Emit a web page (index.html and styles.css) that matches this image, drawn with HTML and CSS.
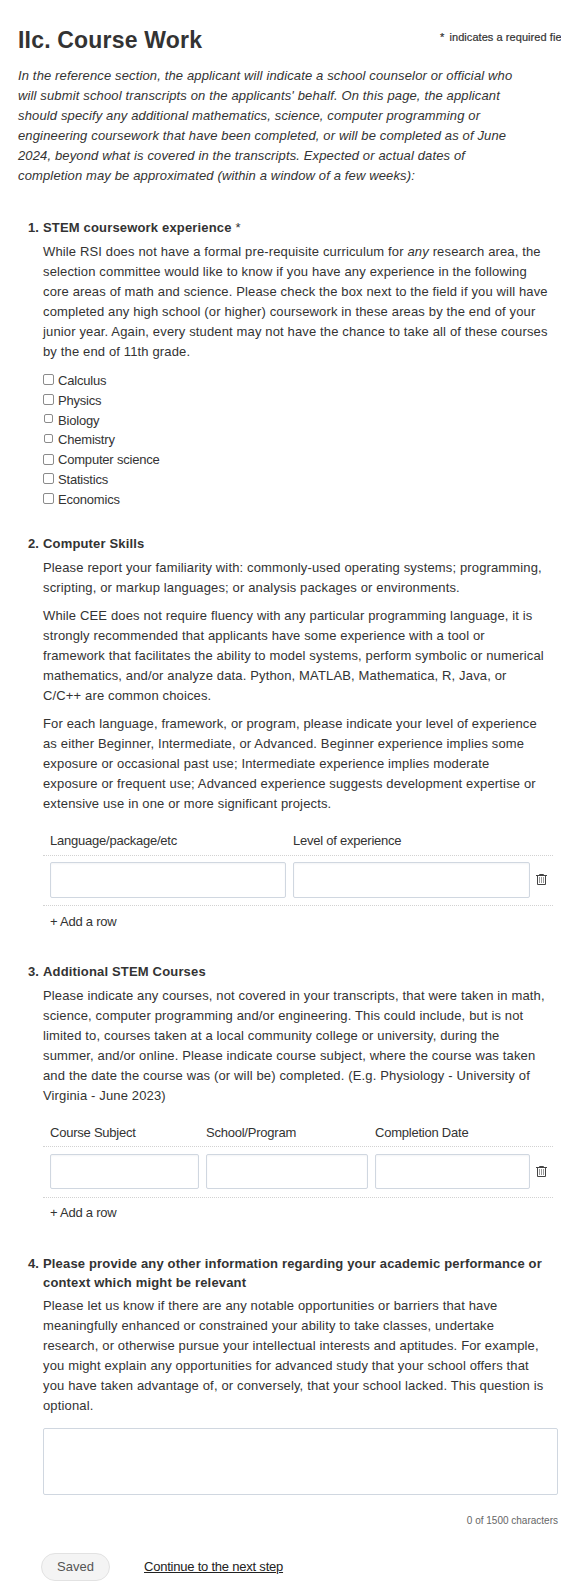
FILE: index.html
```html
<!DOCTYPE html>
<html lang="en">
<head>
<meta charset="utf-8">
<title>IIc. Course Work</title>
<link rel="stylesheet" href="styles.css">
</head>
<body>
<main class="page">
  <header class="page-header">
    <h1 class="title">IIc. Course Work</h1>
    <p class="required-note"><span class="star">*</span> indicates a required field</p>
  </header>
  <p class="intro">In the reference section, the applicant will indicate a school counselor or official who<br>will submit school transcripts on the applicants' behalf. On this page, the applicant<br>should specify any additional mathematics, science, computer programming or<br>engineering coursework that have been completed, or will be completed as of June<br>2024, beyond what is covered in the transcripts. Expected or actual dates of<br>completion may be approximated (within a window of a few weeks):</p>

  <form class="questions">
    <section class="question q-stem">
      <h2 class="heading"><span class="num">1.</span><span>STEM coursework experience <span class="req">*</span></span></h2>
      <p class="text">While RSI does not have a formal pre-requisite curriculum for <em>any</em> research area, the<br>selection committee would like to know if you have any experience in the following<br>core areas of math and science. Please check the box next to the field if you will have<br>completed any high school (or higher) coursework in these areas by the end of your<br>junior year. Again, every student may not have the chance to take all of these courses<br>by the end of 11th grade.</p>
      <div class="checks">
        <label class="check"><input class="box" type="checkbox">Calculus</label>
        <label class="check"><input class="box" type="checkbox">Physics</label>
        <label class="check"><input class="box box-small" type="checkbox">Biology</label>
        <label class="check"><input class="box box-small" type="checkbox">Chemistry</label>
        <label class="check"><input class="box" type="checkbox">Computer science</label>
        <label class="check"><input class="box" type="checkbox">Statistics</label>
        <label class="check"><input class="box" type="checkbox">Economics</label>
      </div>
    </section>

    <section class="question q-skills">
      <h2 class="heading"><span class="num">2.</span><span>Computer Skills</span></h2>
      <p class="text">Please report your familiarity with: commonly-used operating systems; programming,<br>scripting, or markup languages; or analysis packages or environments.</p>
      <p class="text">While CEE does not require fluency with any particular programming language, it is<br>strongly recommended that applicants have some experience with a tool or<br>framework that facilitates the ability to model systems, perform symbolic or numerical<br>mathematics, and/or analyze data. Python, MATLAB, Mathematica, R, Java, or<br>C/C++ are common choices.</p>
      <p class="text">For each language, framework, or program, please indicate your level of experience<br>as either Beginner, Intermediate, or Advanced. Beginner experience implies some<br>exposure or occasional past use; Intermediate experience implies moderate<br>exposure or frequent use; Advanced experience suggests development expertise or<br>extensive use in one or more significant projects.</p>
      <div class="grid">
        <div class="row cols-2 row-head"><span>Language/package/etc</span><span>Level of experience</span></div>
        <div class="row cols-2 row-fields">
          <input class="field" type="text"><input class="field" type="text">
          <svg class="trash" viewBox="0 0 11 13"><path d="M0 2.5h11M3.5 2.5v-1h4v1M1.5 2.5v9h8v-9"/><path class="ribs" d="M3.5 4v6M5.5 4v6M7.5 4v6"/></svg>
        </div>
        <a class="add">+ Add a row</a>
      </div>
    </section>

    <section class="question q-courses">
      <h2 class="heading"><span class="num">3.</span><span>Additional STEM Courses</span></h2>
      <p class="text">Please indicate any courses, not covered in your transcripts, that were taken in math,<br>science, computer programming and/or engineering. This could include, but is not<br>limited to, courses taken at a local community college or university, during the<br>summer, and/or online. Please indicate course subject, where the course was taken<br>and the date the course was (or will be) completed. (E.g. Physiology - University of<br>Virginia - June 2023)</p>
      <div class="grid grid-courses">
        <div class="row cols-3 row-head"><span>Course Subject</span><span>School/Program</span><span>Completion Date</span></div>
        <div class="row cols-3 row-fields">
          <input class="field" type="text"><input class="field" type="text"><input class="field" type="text">
          <svg class="trash" viewBox="0 0 11 13"><path d="M0 2.5h11M3.5 2.5v-1h4v1M1.5 2.5v9h8v-9"/><path class="ribs" d="M3.5 4v6M5.5 4v6M7.5 4v6"/></svg>
        </div>
        <a class="add">+ Add a row</a>
      </div>
    </section>

    <section class="question q-other">
      <h2 class="heading"><span class="num">4.</span><span>Please provide any other information regarding your academic performance or<br>context which might be relevant</span></h2>
      <p class="text">Please let us know if there are any notable opportunities or barriers that have<br>meaningfully enhanced or constrained your ability to take classes, undertake<br>research, or otherwise pursue your intellectual interests and aptitudes. For example,<br>you might explain any opportunities for advanced study that your school offers that<br>you have taken advantage of, or conversely, that your school lacked. This question is<br>optional.</p>
      <textarea class="area"></textarea>
      <p class="counter">0 of 1500 characters</p>
    </section>

    <footer class="actions">
      <button class="saved" type="button">Saved</button>
      <a class="next">Continue to the next step</a>
    </footer>
  </form>
</main>
</body>
</html>
```

FILE: styles.css
```css
* { box-sizing: border-box; }
html { overflow: hidden; }
body {
  margin: 0;
  background: #fff;
  color: #333;
  font: 13px/20px "Liberation Sans", Arial, sans-serif;
}
h1, h2, p { margin: 0; }
.page { width: 561px; height: 1590px; overflow: hidden; white-space: nowrap; }
.page-header { display: flex; align-items: flex-start; padding: 24px 0 0 18px; height: 66px; }
.title { flex: none; width: 422px; font-size: 23px; line-height: 32px; letter-spacing: 0.19px; }
.required-note { flex: none; padding-top: 4px; font-size: 11px; line-height: 18px; letter-spacing: 0.06px; color: #333; -webkit-text-stroke: 0.2px #333; }
.star { margin-right: 2px; }
.intro { padding-left: 18px; font-style: italic; letter-spacing: 0.14px; }
.questions { padding-left: 28px; }
.heading { display: flex; font-size: 13px; line-height: 19px; letter-spacing: 0.17px; }
.num { width: 15px; letter-spacing: 0; flex: none; }
.req { font-weight: 400; }
.question > .text { margin: 0 0 8px 15px; letter-spacing: 0.145px; }
.heading + .text { padding-top: 5px; }
.q-stem { padding-top: 32px; }
.q-skills { padding-top: 24px; }
.q-courses { padding-top: 30px; }
.q-other { padding-top: 31px; }
.q-other .heading + .text { padding-top: 4px; }

.checks { margin: 9px 0 0 15px; letter-spacing: -0.2px; }
.check { display: flex; align-items: center; height: 19.8px; }
.box { appearance: none; width: 11px; height: 11px; margin: 0 4px 2px 0; border: 1px solid #8b8b8b; border-radius: 2px; background: #fff; }
.box-small { width: 9px; height: 9px; margin: 0 5px 3px 1px; }

.grid { margin: 17px 8px 0 15px; letter-spacing: -0.23px; }
.row { display: grid; column-gap: 7px; padding: 0 7px; border-bottom: 1px dotted #d2d2d2; }
.cols-2 { grid-template-columns: 236px 237px 11px; }
.cols-3 { grid-template-columns: 149px 162px 155px 11px; }
.row-head { height: 25px; }
.row-fields { height: 50px; align-items: center; padding-bottom: 1px; }
.row-fields .trash { margin-left: -1px; }
.field { width: 100%; height: 36px; border: 1px solid #d0d7e0; border-radius: 2px; background: #fff; box-shadow: inset 0 1px 2px #f3f4f6; }
.trash { width: 11px; height: 13px; fill: none; stroke: #444; stroke-width: 1; }
.ribs { stroke: #999; }
.add { display: block; padding: 6px 0 0 7px; }
.grid-courses .row-head { height: 24px; }
.grid-courses .row-fields { height: 51px; }
.grid-courses .field { height: 35px; }
.grid-courses .add { padding-top: 5px; }

.area { display: block; width: 515px; height: 67px; margin: 12px 0 0 15px; border: 1px solid #d0d7e0; border-radius: 2px; resize: none; }
.counter { width: 530px; padding-top: 16px; font-size: 10px; text-align: right; color: #666; }
.actions { display: flex; align-items: center; padding: 22px 0 0 13px; }
.saved { width: 69px; height: 28px; margin-right: 34px; padding: 0; border: 1px solid #e2e2e2; border-radius: 14px; background: #f4f4f4; color: #555; font: inherit; }
.next { text-decoration: underline; color: #222; letter-spacing: -0.22px; }
```
